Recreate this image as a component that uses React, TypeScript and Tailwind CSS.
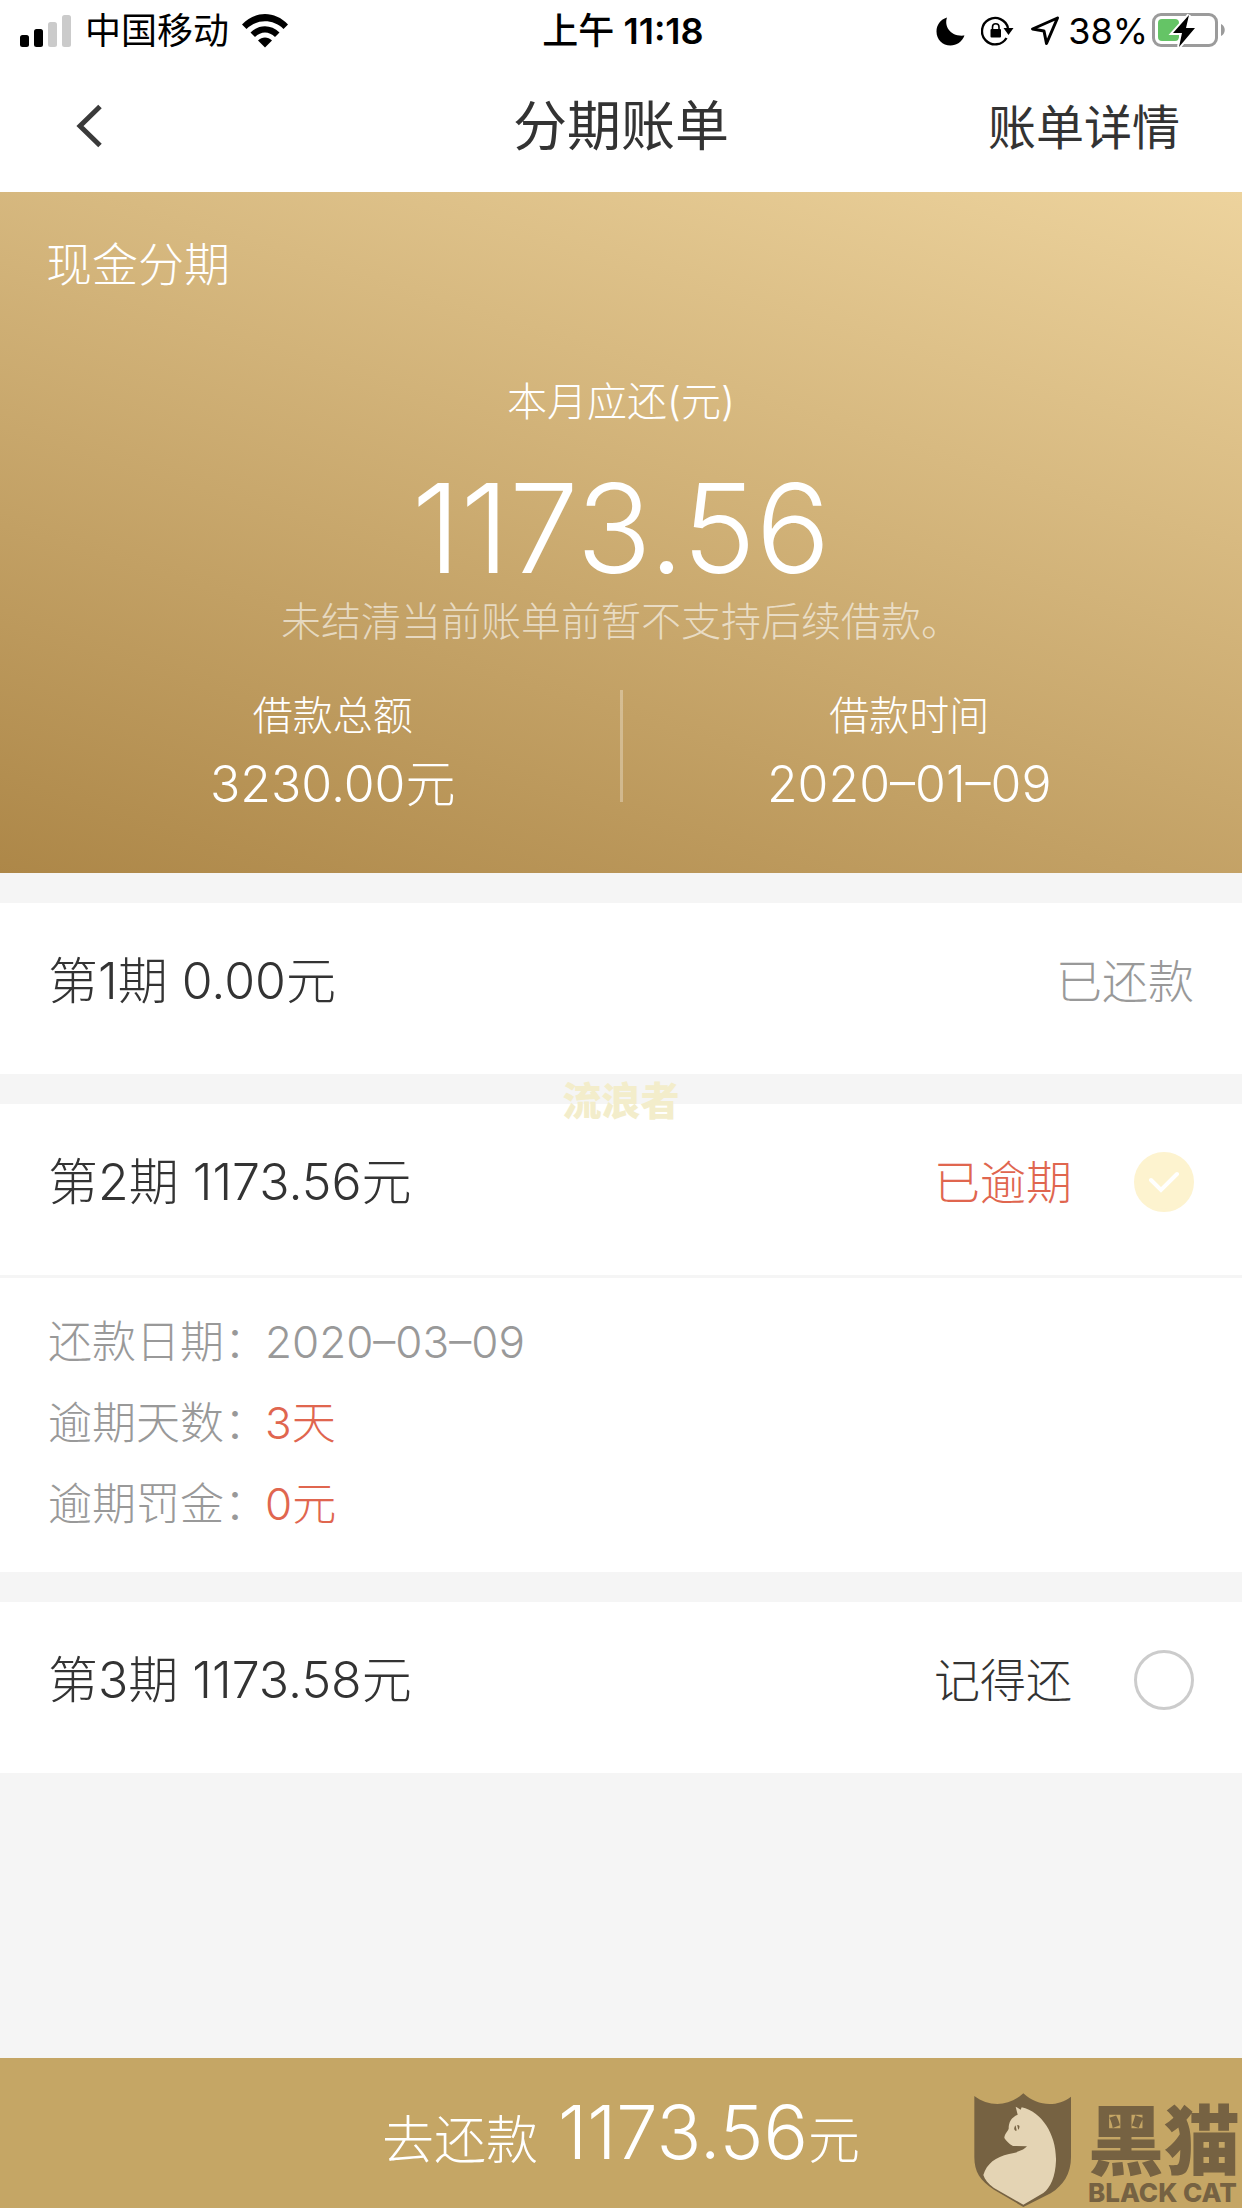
import * as React from "react"

interface Installment {
  id: number
  label: string
  status: string
  statusClass: string
  selectable: boolean
  details?: { name: string; value: string; valueClass: string }[]
}

const installments: Installment[] = [
  {
    id: 1,
    label: "第1期 0.00元",
    status: "已还款",
    statusClass: "text-[#999999]",
    selectable: false,
  },
  {
    id: 2,
    label: "第2期 1173.56元",
    status: "已逾期",
    statusClass: "text-[#e0664f]",
    selectable: true,
    details: [
      { name: "还款日期：", value: "2020–03–09", valueClass: "text-[#999999]" },
      { name: "逾期天数：", value: "3天", valueClass: "text-[#e0664f]" },
      { name: "逾期罚金：", value: "0元", valueClass: "text-[#e0664f]" },
    ],
  },
  {
    id: 3,
    label: "第3期 1173.58元",
    status: "记得还",
    statusClass: "text-[#333333]",
    selectable: true,
  },
]

function StatusBar() {
  return (
    <div className="grid h-[60px] grid-cols-[1fr_auto_1fr] items-center pl-5 pr-4 pt-[2px] text-[36px] leading-[58px] text-black">
      <div className="flex items-center gap-[13px]">
        <svg width="52" height="32" viewBox="0 0 52 32" aria-hidden="true">
          <rect x="0" y="20" width="9" height="12" rx="2.5" />
          <rect x="14" y="14" width="9" height="18" rx="2.5" />
          <rect x="28" y="7" width="9" height="25" rx="2.5" fill="#cbcbcb" />
          <rect x="42" y="0" width="9" height="32" rx="2.5" fill="#cbcbcb" />
        </svg>
        <span>中国移动</span>
        <svg width="46" height="34" viewBox="0 0 46 34" aria-hidden="true">
          <path d="M0 10.5C13-3.500 33-3.500 46 10.500L41.500 15C31 4.800 15 4.800 4.500 15Z" />
          <path d="M8.500 18.500C17 10 29 10 37.500 18.500L33 23C27 17 19 17 13 23Z" />
          <path d="M16 26.500C20 22.500 26 22.500 30 26.500L23 33.500Z" />
        </svg>
      </div>
      <div className="font-semibold">
        <span className="font-medium">上午</span> 11:18
      </div>
      <div className="flex items-center justify-end">
        <svg className="mr-4" width="29" height="29" viewBox="0 0 29 29" aria-hidden="true">
          <path d="M11 0.500C8 9 14 20 28.500 18.500C26 25 20.500 28.500 14.500 28.500C6.500 28.500 0.500 22.500 0.500 14.500C0.500 8 4.500 2.500 11 0.500Z" />
        </svg>
        <svg className="mr-4" width="33" height="30" viewBox="0 0 33 30" aria-hidden="true">
          <path d="M27 12A13.200 13.200 0 1 0 25.500 22" fill="none" stroke="#000" strokeWidth="2.400" />
          <path d="M22.500 12H32.500L27.500 19Z" />
          <rect x="9.500" y="13" width="10.500" height="8.500" rx="1" />
          <path d="M11.500 13.500V11A3.200 3.200 0 0 1 18 11V13.500" fill="none" stroke="#000" strokeWidth="1.600" />
        </svg>
        <svg className="mr-2" width="30" height="30" viewBox="0 0 30 30" aria-hidden="true">
          <path
            d="M27.500 2L2.500 13L14 15L16.500 27.500Z"
            fill="none"
            stroke="#000"
            strokeWidth="3"
            strokeLinejoin="round"
          />
        </svg>
        <span className="mr-1">38%</span>
        <svg width="74" height="36" viewBox="0 0 74 36" aria-hidden="true">
          <rect x="1.500" y="1.500" width="63" height="31" rx="7.500" fill="none" stroke="#9b9b9b" strokeWidth="3" />
          <rect x="6" y="6" width="21" height="22" rx="4" fill="#65c466" />
          <path d="M69 11C74 13 74 21 69 23Z" fill="#9b9b9b" />
          <path
            d="M37 2L21 20H30L27 34L43 15H34Z"
            stroke="#fff"
            strokeWidth="4"
            paintOrder="stroke"
          />
        </svg>
      </div>
    </div>
  )
}

function NavBar() {
  return (
    <header className="grid h-[132px] grid-cols-[1fr_auto_1fr] items-center pl-[62px] pr-[62px] text-[#333333]">
      <button type="button" aria-label="返回" className="flex h-20 w-20 items-center pl-[14px]">
        <svg width="28" height="44" viewBox="0 0 28 44" aria-hidden="true">
          <path d="M24 2.500L4 22L24 41.500" fill="none" stroke="#3a3a3a" strokeWidth="5" />
        </svg>
      </button>
      <h1 className="text-[54px] font-normal">分期账单</h1>
      <a href="#detail" className="justify-self-end pt-1 text-[48px]">
        账单详情
      </a>
    </header>
  )
}

function Summary() {
  return (
    <section className="bg-[linear-gradient(17deg,#ad8748,#edd39d)] px-[46px] pb-[51px] pt-[40px] font-light text-white">
      <h2 className="text-[46px] leading-[64px]">现金分期</h2>
      <div className="mt-[76px] text-center">
        <p className="text-[40px] leading-[60px]">本月应还(元)</p>
        <p className="mt-[32px] text-[124px] leading-[128px]">1173.56</p>
        <p className="text-[40px] leading-[60px] text-white/60">
          未结清当前账单前暂不支持后续借款。
        </p>
      </div>
      <div className="mt-[34px] flex text-center">
        <dl className="flex-1">
          <dt className="text-[40px] leading-[60px]">借款总额</dt>
          <dd className="text-[50px] leading-[76px]">3230.00元</dd>
        </dl>
        <div className="mt-1 h-[112px] w-[3px] bg-white/30" />
        <dl className="flex-1">
          <dt className="text-[40px] leading-[60px]">借款时间</dt>
          <dd className="text-[50px] leading-[76px]">2020–01–09</dd>
        </dl>
      </div>
    </section>
  )
}

interface InstallmentCardProps {
  item: Installment
  checked: boolean
  onToggle: () => void
}

function InstallmentCard({ item, checked, onToggle }: InstallmentCardProps) {
  const inputId = `installment-${item.id}`

  return (
    <li className="bg-white font-light">
      <div className="flex items-center px-12 pb-[63px] pt-[48px] leading-[60px]">
        {item.selectable ? (
          <label htmlFor={inputId} className="flex-1 text-[50px] text-[#333333]">
            {item.label}
          </label>
        ) : (
          <span className="flex-1 text-[50px] text-[#333333]">{item.label}</span>
        )}
        <span className={`text-[46px] ${item.statusClass}`}>{item.status}</span>
        {item.selectable && (
          <span className="ml-[62px] grid size-[60px] place-items-center">
            <input
              id={inputId}
              type="checkbox"
              checked={checked}
              onChange={onToggle}
              className="col-start-1 row-start-1 size-[60px] appearance-none rounded-full border-[3px] border-[#cccccc] checked:border-[#fdf3cf] checked:bg-[#fdf3cf]"
            />
            {checked && (
              <svg
                className="pointer-events-none col-start-1 row-start-1"
                width="30"
                height="22"
                viewBox="0 0 30 22"
                aria-hidden="true"
              >
                <path
                  d="M2 9L12 19L28 3"
                  fill="none"
                  stroke="#fff"
                  strokeWidth="4"
                  strokeLinecap="round"
                />
              </svg>
            )}
          </span>
        )}
      </div>
      {item.details && (
        <dl className="border-t-[3px] border-[#f5f5f5] px-12 pb-[27px] pt-[24px] text-[44px] leading-[81px]">
          {item.details.map((detail) => (
            <div key={detail.name} className="flex">
              <dt className="w-[217px] whitespace-nowrap text-[#999999]">{detail.name}</dt>
              <dd className={detail.valueClass}>{detail.value}</dd>
            </div>
          ))}
        </dl>
      )}
    </li>
  )
}

function BlackCatMark() {
  return (
    <div className="pointer-events-none absolute bottom-0 right-0 flex items-end text-[#766242]">
      <svg width="98" height="116" viewBox="0 0 294 348" aria-hidden="true">
        <path
          d="M1 12C45 46 106 44 148 4C190 44 250 46 291 14V195C291 245 268 280 230 304L148 345L60 293C18 265 1 240 1 195Z"
          fill="#766242"
        />
        <path
          d="M125 44L140 53L143 46C205 60 248 130 246 206C244 255 230 285 208 303L148 338L60 288C42 275 32 262 28 249C38 215 65 195 105 186C135 180 152 172 159 163L117 162C104 155 96 146 91 138C92 125 100 120 104 110C104 90 112 76 131 68Z"
          fill="#e4d4b4"
        />
        <path d="M121 108C121 100 130 97 136 101C138 110 132 117 124 116C121 114 120 111 121 108Z" fill="#766242" />
        <path d="M127 99L131 117" stroke="#e4d4b4" strokeWidth="5" />
      </svg>
      <div className="ml-4 flex flex-col pr-[2px]">
        <span className="font-['Noto_Sans_CJK_SC',sans-serif] text-[76px] font-black leading-[84px]">黑猫</span>
        <span className="text-[26px] font-extrabold leading-[30px]">BLACK CAT</span>
      </div>
    </div>
  )
}

export default function App() {
  const [selected, setSelected] = React.useState<number[]>([2])

  const toggle = (id: number) => {
    setSelected((prev) => (prev.includes(id) ? prev.filter((x) => x !== id) : [...prev, id]))
  }

  return (
    <div
      lang="zh-CN"
      className="relative flex min-h-screen flex-col bg-[#f5f5f5] font-['Inter','Noto_Sans_CJK_SC',sans-serif]"
    >
      <div className="bg-white">
        <StatusBar />
        <NavBar />
      </div>
      <Summary />

      <main className="relative flex-1 py-[30px]">
        <ul className="flex flex-col gap-[30px]">
          {installments.map((item) => (
            <InstallmentCard
              key={item.id}
              item={item}
              checked={selected.includes(item.id)}
              onToggle={() => toggle(item.id)}
            />
          ))}
        </ul>
        {/* Username watermark */}
        <span className="pointer-events-none absolute inset-x-0 top-[198px] text-center text-[39px] font-black leading-[60px] text-[#f3edcb]">
          流浪者
        </span>
      </main>

      <footer className="relative">
        <button
          type="button"
          className="flex h-[150px] w-full items-baseline justify-center bg-[#c5a665] pt-[26px] font-light text-white"
        >
          <span className="text-[52px]">去还款</span>
          <span className="ml-5 text-[74px] leading-[96px]">1173.56</span>
          <span className="text-[52px]">元</span>
        </button>
        <BlackCatMark />
      </footer>
    </div>
  )
}
